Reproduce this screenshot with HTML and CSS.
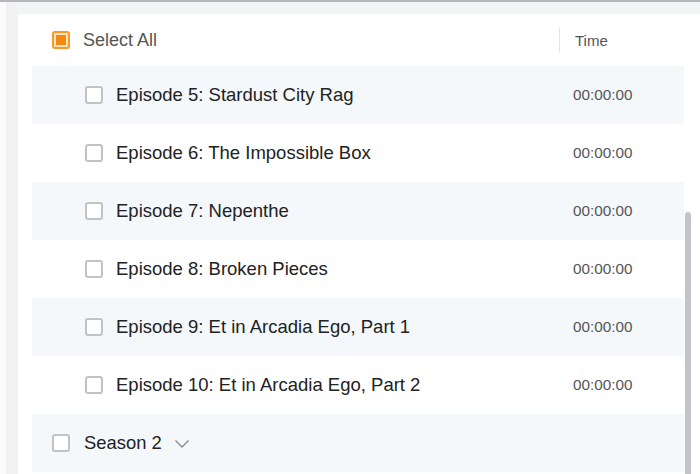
FILE: index.html
```html
<!DOCTYPE html>
<html>
<head>
<meta charset="utf-8">
<link rel="stylesheet" href="styles.css">
</head>
<body>
<div class="topline"></div>
<div class="frame">
  <div class="rail"></div>
  <div class="panel">
    <div class="header">
      <div class="hcell-name">
        <span class="cb cb-checked"><span class="cb-inner"></span></span>
        <span class="select-all">Select All</span>
      </div>
      <div class="hcell-time">Time</div>
    </div>
    <div class="list">
      <div class="rows">
        <div class="row alt"><span class="cb"></span><span class="ep">Episode 5: Stardust City Rag</span><span class="time">00:00:00</span></div>
        <div class="row"><span class="cb"></span><span class="ep">Episode 6: The Impossible Box</span><span class="time">00:00:00</span></div>
        <div class="row alt"><span class="cb"></span><span class="ep">Episode 7: Nepenthe</span><span class="time">00:00:00</span></div>
        <div class="row"><span class="cb"></span><span class="ep">Episode 8: Broken Pieces</span><span class="time">00:00:00</span></div>
        <div class="row alt"><span class="cb"></span><span class="ep">Episode 9: Et in Arcadia Ego, Part 1</span><span class="time">00:00:00</span></div>
        <div class="row"><span class="cb"></span><span class="ep">Episode 10: Et in Arcadia Ego, Part 2</span><span class="time">00:00:00</span></div>
        <div class="row alt season"><span class="cb"></span><span class="season-name">Season 2</span>
          <svg class="chev" width="16" height="10" viewBox="0 0 16 10"><path d="M1.5 1.5 L8 8 L14.5 1.5" fill="none" stroke="#8a8a8a" stroke-width="1.4"/></svg>
        </div>
      </div>
      <div class="scroll"><div class="thumb"></div></div>
    </div>
  </div>
</div>
</body>
</html>
```

FILE: styles.css
```css
* { box-sizing: border-box; }
html, body { margin: 0; padding: 0; }
body {
  width: 700px;
  height: 474px;
  overflow: hidden;
  background: #f3f4f6;
  font-family: "Liberation Sans", Arial, sans-serif;
}
.topline {
  height: 2px;
  background: #b4b6bb;
}
.frame {
  display: flex;
  padding-top: 12px;
  height: 472px;
}
.rail {
  width: 18px;
  flex: none;
  background: linear-gradient(to right, #fbfbfb 0 6px, #f1f2f4 6px 18px);
  margin-top: -12px;
}
.panel {
  flex: 1;
  background: #ffffff;
  padding-left: 14px;
  display: flex;
  flex-direction: column;
}
.header {
  height: 52px;
  display: flex;
  align-items: center;
}
.hcell-name {
  width: 528px;
  display: flex;
  align-items: center;
  padding-left: 20px;
  height: 26px;
  border-right: 1px solid #e3e4e6;
}
.select-all {
  margin-left: 13px;
  font-size: 18px;
  color: #555555;
}
.hcell-time {
  padding-left: 15px;
  font-size: 15px;
  color: #555555;
}
.list {
  display: flex;
  flex: 1;
}
.rows {
  width: 652px;
  flex: none;
}
.row {
  height: 58px;
  display: flex;
  align-items: center;
  padding-left: 53px;
}
.row.alt { background: #f4f8fb; }
.ep {
  margin-left: 13px;
  font-size: 18.5px;
  color: #222222;
  width: 457px;
}
.time {
  font-size: 15.3px;
  color: #555555;
}
.season { padding-left: 20px; }
.season-name {
  margin-left: 14px;
  font-size: 18.4px;
  color: #222222;
}
.chev { margin-left: 12px; margin-top: 1px; }
.cb {
  width: 18px;
  height: 18px;
  flex: none;
  border: 2px solid #c2c2c2;
  border-radius: 3px;
  background: #fff;
  display: flex;
  align-items: center;
  justify-content: center;
}
.cb-checked {
  border-color: #f59a2a;
  background: #fde3bf;
}
.cb-inner {
  width: 10px;
  height: 10px;
  background: #f28a0c;
}
.scroll {
  width: 7px;
  padding-top: 146px;
  padding-left: 1px;
}
.thumb {
  width: 6px;
  height: 100%;
  background: #c3c3cc;
  border-radius: 3px 3px 0 0;
}
```
